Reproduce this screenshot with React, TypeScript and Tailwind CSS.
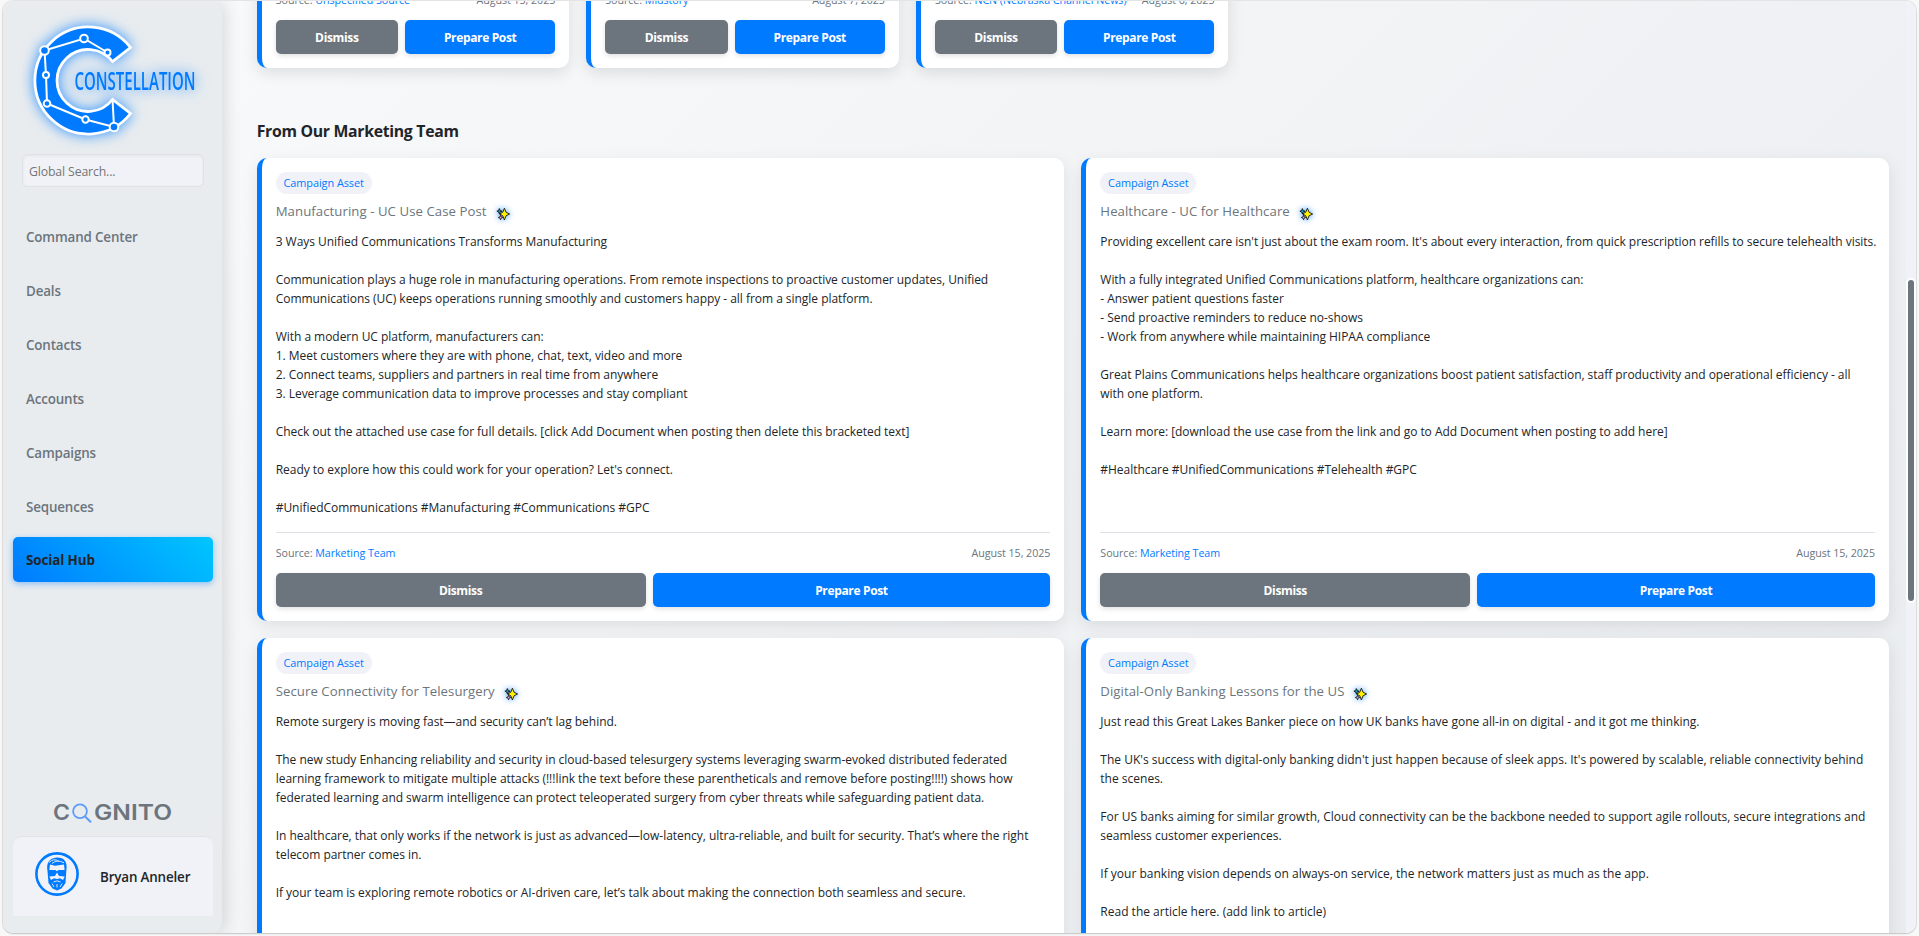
import React from "react";

type Post = { title: string; lines: string[]; height: string; tracking: string };

const posts: Post[] = [
  {
    title: "Manufacturing - UC Use Case Post",
    height: "h-[463px]",
    tracking: "tracking-[-0.035px]",
    lines: [
      "3 Ways Unified Communications Transforms Manufacturing",
      "",
      "Communication plays a huge role in manufacturing operations. From remote inspections to proactive customer updates, Unified",
      "Communications (UC) keeps operations running smoothly and customers happy - all from a single platform.",
      "",
      "With a modern UC platform, manufacturers can:",
      "1. Meet customers where they are with phone, chat, text, video and more",
      "2. Connect teams, suppliers and partners in real time from anywhere",
      "3. Leverage communication data to improve processes and stay compliant",
      "",
      "Check out the attached use case for full details. [click Add Document when posting then delete this bracketed text]",
      "",
      "Ready to explore how this could work for your operation? Let's connect.",
      "",
      "#UnifiedCommunications #Manufacturing #Communications #GPC",
    ],
  },
  {
    title: "Healthcare - UC for Healthcare",
    height: "h-[463px]",
    tracking: "tracking-[-0.04px]",
    lines: [
      "Providing excellent care isn't just about the exam room. It's about every interaction, from quick prescription refills to secure telehealth visits.",
      "",
      "With a fully integrated Unified Communications platform, healthcare organizations can:",
      "- Answer patient questions faster",
      "- Send proactive reminders to reduce no-shows",
      "- Work from anywhere while maintaining HIPAA compliance",
      "",
      "Great Plains Communications helps healthcare organizations boost patient satisfaction, staff productivity and operational efficiency - all",
      "with one platform.",
      "",
      "Learn more: [download the use case from the link and go to Add Document when posting to add here]",
      "",
      "#Healthcare #UnifiedCommunications #Telehealth #GPC",
    ],
  },
  {
    title: "Secure Connectivity for Telesurgery",
    height: "h-[500px]",
    tracking: "tracking-[-0.03px]",
    lines: [
      "Remote surgery is moving fast—and security can’t lag behind.",
      "",
      "The new study Enhancing reliability and security in cloud-based telesurgery systems leveraging swarm-evoked distributed federated",
      "learning framework to mitigate multiple attacks (!!!link the text before these parentheticals and remove before posting!!!!) shows how",
      "federated learning and swarm intelligence can protect teleoperated surgery from cyber threats while safeguarding patient data.",
      "",
      "In healthcare, that only works if the network is just as advanced—low-latency, ultra-reliable, and built for security. That’s where the right",
      "telecom partner comes in.",
      "",
      "If your team is exploring remote robotics or AI-driven care, let’s talk about making the connection both seamless and secure.",
    ],
  },
  {
    title: "Digital-Only Banking Lessons for the US",
    height: "h-[500px]",
    tracking: "tracking-[0px]",
    lines: [
      "Just read this Great Lakes Banker piece on how UK banks have gone all-in on digital - and it got me thinking.",
      "",
      "The UK's success with digital-only banking didn't just happen because of sleek apps. It's powered by scalable, reliable connectivity behind",
      "the scenes.",
      "",
      "For US banks aiming for similar growth, Cloud connectivity can be the backbone needed to support agile rollouts, secure integrations and",
      "seamless customer experiences.",
      "",
      "If your banking vision depends on always-on service, the network matters just as much as the app.",
      "",
      "Read the article here. (add link to article)",
    ],
  },
];

const newsCards = [
  { source: "Unspecified Source", date: "August 15, 2025" },
  { source: "Midstory", date: "August 7, 2025" },
  { source: "NCN (Nebraska Channel News)", date: "August 6, 2025" },
];

const navItems = ["Command Center", "Deals", "Contacts", "Accounts", "Campaigns", "Sequences"];

function Sparkles() {
  return (
    <svg width="14" height="14" viewBox="0 0 16 16" className="block overflow-visible drop-shadow-[0_0_3px_rgba(0,123,255,0.8)]">
      <path d="M3.8 1.8 4.8 4 7 4.8 4.8 5.6 3.8 7.8 3 5.8 1 4.8 3 4Z" fill="#13a5b5" stroke="#111" strokeWidth="1" />
      <path d="M5.2 9.4 5.9 11.3 7.6 12 5.9 12.7 5.2 14.6 4.5 12.7 2.6 12 4.5 11.3Z" fill="#f4a6c0" stroke="#111" strokeWidth="0.9" />
      <path d="M9.6 1.4 11.5 6 15.6 8 11.5 10 9.6 14.8 7.7 10 4 8 7.7 6Z" fill="#fff100" stroke="#111" strokeWidth="1" />
    </svg>
  );
}

function Actions() {
  return (
    <div className="flex gap-[7px] text-[12px] font-bold tracking-[-0.35px] text-white">
      <button className="h-[34px] flex-[1_1_50px] rounded-[5px] bg-[#6c757d] pt-px shadow-[0_2px_5px_rgba(0,0,0,0.12)]">Dismiss</button>
      <button className="h-[34px] flex-[1_1_78px] rounded-[5px] bg-[#007bff] pt-px shadow-[0_2px_5px_rgba(0,0,0,0.12)]">Prepare Post</button>
    </div>
  );
}

function Meta({ source, date }: { source: string; date: string }) {
  return (
    <div className="flex justify-between whitespace-nowrap text-[10.7px] leading-4 tracking-[-0.05px] text-[#6c757d]">
      <span>
        Source: <span className="text-[#007bff]">{source}</span>
      </span>
      <span>{date}</span>
    </div>
  );
}

function PostCard({ post }: { post: Post }) {
  return (
    <article className={"flex min-w-0 flex-col rounded-[10px] border-l-[5px] border-[#007bff] bg-white p-[14px] shadow-[0_5px_16px_rgba(0,0,0,0.09)] " + post.height}>
      <span className="flex h-[22px] w-24 shrink-0 items-center justify-center whitespace-nowrap rounded-[11px] bg-[#f0f2f7] text-[10.9px] font-medium tracking-[-0.05px] text-[#007bff]">
        Campaign Asset
      </span>
      <div className="mt-2 flex h-5 shrink-0 items-center gap-[9px] whitespace-nowrap text-[13.2px] tracking-[0.06px] text-[#6c757d]">
        {post.title}
        <span className="mt-1">
          <Sparkles />
        </span>
      </div>
      <div className={"mt-[10px] text-[12px] text-[#212529] " + post.tracking}>
        {post.lines.map((line, i) => (
          <p key={i} className="h-[19px] whitespace-nowrap leading-[19px]">{line}</p>
        ))}
      </div>
      <div className="mt-auto border-t border-[#dee2e6] pt-3">
        <Meta source="Marketing Team" date="August 15, 2025" />
        <div className="mt-3">
          <Actions />
        </div>
      </div>
    </article>
  );
}

function Logo() {
  const stars = [
    [44.5, 50.5, 4.3],
    [84, 38.5, 3.8],
    [107.5, 52.5, 3],
    [46, 75, 3],
    [47, 103.5, 3.3],
    [85.5, 119.5, 3.2],
    [114, 127, 4.3],
  ];
  return (
    <svg width="200" height="140" viewBox="13 1 200 140" className="block shrink-0 overflow-visible drop-shadow-[0_0_7px_rgba(0,123,255,0.8)]">
      <path d="M130.5 47.5 A53.5 53.5 0 1 0 130.5 113.5 L112.5 99.5 A31 31 0 1 1 112.5 61.5Z" fill="#007bff" stroke="#fff" strokeWidth="2.8" />
      <path d="M107.5 52.5 84 38.5 44.5 50.5 46 75 47 103.5 85.5 119.5 114 127 112.5 99" fill="none" stroke="#fff" strokeWidth="2" />
      {stars.map(([cx, cy, r]) => (
        <circle key={cx} cx={cx} cy={cy} r={r} fill="#007bff" stroke="#fff" strokeWidth="2" />
      ))}
      <text x="74.5" y="90" fontFamily="'Open Sans', sans-serif" fontSize="25.5" fontWeight="600" textLength="121" lengthAdjust="spacingAndGlyphs" fill="#007bff">
        CONSTELLATION
      </text>
    </svg>
  );
}

function Cognito() {
  return (
    <svg width="120" height="22" viewBox="0 0 120 22" className="mx-auto block shrink-0 overflow-visible" fontFamily="Inter, sans-serif" fontSize="21.5" fontWeight="600" fill="#6c757d">
      <text x="0" y="17.5" textLength="17" lengthAdjust="spacingAndGlyphs">C</text>
      <circle cx="27" cy="9.3" r="6.9" fill="none" stroke="#5a9cf8" strokeWidth="1.8" />
      <path d="M31.8 14.3 38 20.3" fill="none" stroke="#5a9cf8" strokeWidth="2" />
      <text x="41" y="17.5" textLength="78" lengthAdjust="spacingAndGlyphs">GNITO</text>
    </svg>
  );
}

function Avatar() {
  return (
    <svg width="44" height="44" viewBox="0 0 44 44" className="shrink-0">
      <circle cx="22" cy="22" r="20.6" fill="none" stroke="#007bff" strokeWidth="2.6" />
      <path d="M12.5 19C11 11 14.5 6 21.5 5.5C29 5.3 33 9.5 31.3 19L30.5 31 26.5 36.5 22 38.5 17.5 36.5 13.5 31Z" fill="#007bff" />
      <path d="M14.3 18 15 12.5 20 13.8 29 12.5 29.6 18H23.5L22 19.2 20.4 18ZM14.3 24.5 20 24 22 20.5 24 24 29.7 24.5 28 28 25 26.2 22 27 19 26.2 16 28Z" fill="#f0f2f7" />
      <path d="M14 10.5Q19 5.5 24 9.5M17 11.5Q22 7 29 10.8M18.5 30 22 28.8 25.5 30M22 32V35.5M17 31.5 19 35M27 31.5 25 35" fill="none" stroke="#f0f2f7" strokeWidth="0.9" />
    </svg>
  );
}

export default function App() {
  return (
    <div className="h-[936px] overflow-hidden bg-[#f8f8f8] px-[3px] pt-px font-['Open_Sans','Noto_Sans',sans-serif]">
      <div className="flex h-[932px] overflow-hidden rounded-[10px] bg-linear-[135deg,#f9fafb_0%,#e9ecef_100%] shadow-[0_0_0_1px_rgba(0,0,0,0.07),0_1px_2px_rgba(0,0,0,0.15)]">
        <aside className="z-10 flex h-full w-[219px] shrink-0 flex-col rounded-[10px] bg-[#e8ecef] pb-[17px] pl-[10px] pr-[9px] shadow-[4px_0_16px_rgba(0,0,0,0.12)]">
          <Logo />
          <input
            placeholder="Global Search..."
            className="mx-[9px] mt-[13px] h-[33px] shrink-0 rounded-[5px] border border-[#dfe2e6] bg-[#f0f2f7] px-[6px] pt-px text-[12.3px] tracking-[-0.15px] shadow-[inset_0_1px_3px_rgba(0,0,0,0.06)] placeholder:text-[#757575]"
          />
          <nav className="mt-[26px] flex flex-col gap-[9px] text-[13.4px] font-semibold tracking-[-0.16px] text-[#6c757d]">
            {navItems.map((item) => (
              <a key={item} className="flex h-[45px] items-center px-[13px] pt-1">{item}</a>
            ))}
            <a className="flex h-[45px] items-center rounded-[5px] bg-linear-[45deg,#007bff_0%,#00c6ff_100%] px-[13px] pt-[2px] font-bold tracking-[-0.1px] text-[#212529] shadow-[0_2px_6px_rgba(0,123,255,0.4)]">
              Social Hub
            </a>
          </nav>
          <div className="mt-auto">
            <Cognito />
          </div>
          <div className="mt-[12px] flex h-20 shrink-0 items-start rounded-t-[9px] border-t border-[#dfe2e6] bg-[#f0f2f7] pl-[22px] pt-[15px]">
            <Avatar />
            <span className="ml-[21px] mt-[15px] whitespace-nowrap text-[13.4px] font-semibold leading-5 tracking-[-0.16px] text-[#212529]">Bryan Anneler</span>
          </div>
        </aside>
        <main className="flex min-w-0 flex-1 flex-col overflow-hidden pl-[34.7px] pr-[17px]">
          <section className="flex h-[67px] shrink-0 items-end gap-[17px]">
            {newsCards.map((card) => (
              <article
                key={card.source}
                className="flex h-[90px] w-[312.6px] shrink-0 flex-col justify-end rounded-[10px] border-l-[5px] border-[#007bff] bg-white p-[14px] shadow-[0_5px_16px_rgba(0,0,0,0.11)]"
              >
                <Meta source={card.source} date={card.date} />
                <div className="mt-3">
                  <Actions />
                </div>
              </article>
            ))}
          </section>
          <h2 className="mt-[50px] h-[26px] shrink-0 text-[15.8px] font-bold leading-[26px] tracking-[-0.3px] text-[#212529]">From Our Marketing Team</h2>
          <section className="mt-[14px] grid shrink-0 grid-cols-2 gap-[17px]">
            {posts.map((post) => (
              <PostCard key={post.title} post={post} />
            ))}
          </section>
        </main>
        <div className="flex w-[10px] shrink-0 flex-col bg-[#f0f2f7] pt-[277px]">
          <div className="h-[325px] rounded-[6px] border-[2px] border-white bg-[#6c757d]" />
        </div>
      </div>
    </div>
  );
}
